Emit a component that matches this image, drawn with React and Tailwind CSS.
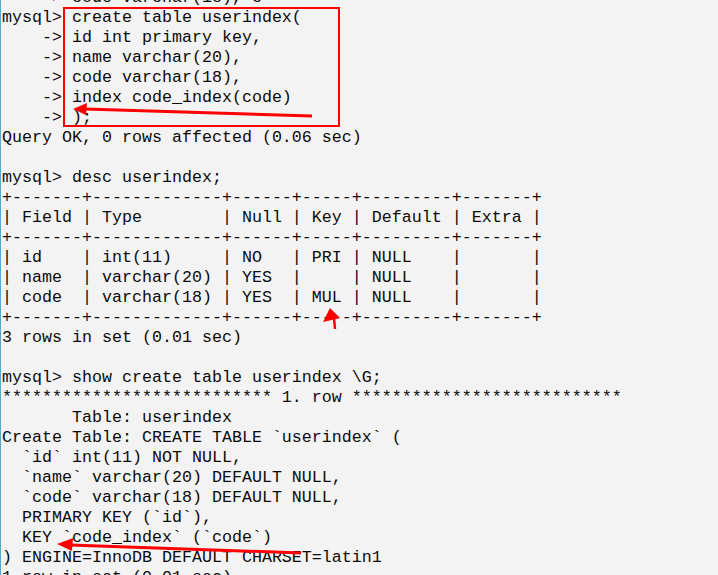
import React from 'react';

const lines = [
  '    -> code varchar(18), c',
  'mysql> create table userindex(',
  '    -> id int primary key,',
  '    -> name varchar(20),',
  '    -> code varchar(18),',
  '    -> index code_index(code)',
  '    -> );',
  'Query OK, 0 rows affected (0.06 sec)',
  '',
  'mysql> desc userindex;',
  '+-------+-------------+------+-----+---------+-------+',
  '| Field | Type        | Null | Key | Default | Extra |',
  '+-------+-------------+------+-----+---------+-------+',
  '| id    | int(11)     | NO   | PRI | NULL    |       |',
  '| name  | varchar(20) | YES  |     | NULL    |       |',
  '| code  | varchar(18) | YES  | MUL | NULL    |       |',
  '+-------+-------------+------+-----+---------+-------+',
  '3 rows in set (0.01 sec)',
  '',
  'mysql> show create table userindex \\G;',
  '*************************** 1. row ***************************',
  '       Table: userindex',
  'Create Table: CREATE TABLE `userindex` (',
  '  `id` int(11) NOT NULL,',
  '  `name` varchar(20) DEFAULT NULL,',
  '  `code` varchar(18) DEFAULT NULL,',
  '  PRIMARY KEY (`id`),',
  '  KEY `code_index` (`code`)',
  ') ENGINE=InnoDB DEFAULT CHARSET=latin1',
  '1 row in set (0.01 sec)',
];

// red markup drawn on top of the console capture
const Annotations = () => (
  <svg className="absolute left-0 top-0" width="718" height="575" viewBox="0 0 718 575">
    <rect x="63" y="8" width="275" height="118" fill="none" stroke="#ff0000" strokeWidth="2" />

    <line x1="84" y1="109" x2="311" y2="116" stroke="#ff0000" strokeWidth="3" />
    <polygon points="72,109 86,103 85,115" fill="#ff0000" />

    <line x1="333" y1="318" x2="334" y2="329" stroke="#ff0000" strokeWidth="2.5" />
    <polygon points="329,308 322,322 339,318" fill="#ff0000" />

    <line x1="69" y1="545" x2="300" y2="553" stroke="#ff0000" strokeWidth="3" />
    <polygon points="56,544 72,538 71,551" fill="#ff0000" />
  </svg>
);

export default function App() {
  return (
    <div className="relative w-[718px] h-[575px] overflow-hidden bg-[#f3f3f3] border-l border-[#5aa8c8]">
      <pre className="mt-[-12px] pl-[1px] font-['Liberation_Mono',monospace] text-[16.667px] leading-[20px] text-[#0c0c0c] whitespace-pre">
        {lines.map((line, i) => (
          <div key={i} className="h-[20px]">{line}</div>
        ))}
      </pre>
      <Annotations />
    </div>
  );
}
